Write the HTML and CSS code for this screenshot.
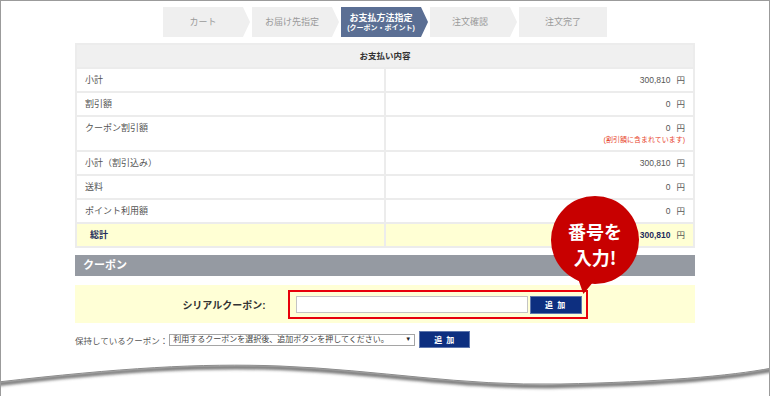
FILE: index.html
```html
<!DOCTYPE html>
<html lang="ja">
  <head>
    <meta charset="utf-8">
    <title>お支払方法指定</title>
    <link rel="stylesheet" href="styles.css">
  </head>
  <body>
    <div class="shot">
      <ol class="steps">
        <li class="step">カート</li>
        <li class="step">お届け先指定</li>
        <li class="step current">お支払方法指定<small>(クーポン・ポイント)</small></li>
        <li class="step">注文確認</li>
        <li class="step last">注文完了</li>
      </ol>

      <table class="summary">
        <tr>
          <th colspan="2">お支払い内容</th>
        </tr>
        <tr>
          <td>小計</td>
          <td class="val"><span class="num">300,810</span><span class="yen">円</span></td>
        </tr>
        <tr>
          <td>割引額</td>
          <td class="val"><span class="num">0</span><span class="yen">円</span></td>
        </tr>
        <tr>
          <td>クーポン割引額</td>
          <td class="val"><span class="num">0</span><span class="yen">円</span><p class="note">(割引額に含まれています)</p></td>
        </tr>
        <tr>
          <td>小計（割引込み）</td>
          <td class="val"><span class="num">300,810</span><span class="yen">円</span></td>
        </tr>
        <tr>
          <td>送料</td>
          <td class="val"><span class="num">0</span><span class="yen">円</span></td>
        </tr>
        <tr>
          <td>ポイント利用額</td>
          <td class="val"><span class="num">0</span><span class="yen">円</span></td>
        </tr>
        <tr class="total">
          <td>総計</td>
          <td class="val"><b class="num">300,810</b><span class="yen">円</span></td>
        </tr>
      </table>

      <h3 class="section-title">クーポン</h3>

      <div class="serial">
        <label for="serial">シリアルクーポン:</label>
        <div class="serial-box">
          <input id="serial" type="text">
          <button type="button" class="btn">追 加</button>
        </div>
        <div class="bubble">番号を<br>入力!</div>
      </div>

      <div class="held">
        <span>保持しているクーポン：</span>
        <span class="select-wrap">
          <select>
            <option>利用するクーポンを選択後、追加ボタンを押してください。</option>
          </select>
        </span>
        <button type="button" class="btn btn-tall">追 加</button>
      </div>

      <!-- torn paper edge -->
      <svg class="torn" width="770" height="46" viewBox="0 350 770 46">
        <defs>
          <clipPath id="below">
            <path d="M-2,382 C120,368 200,363 280,366 C380,370 460,386 560,384 C660,382 730,376 772,368 L772,396 L-2,396 Z" />
          </clipPath>
          <filter id="soft" x="-5%" y="-50%" width="110%" height="200%">
            <feGaussianBlur stdDeviation="1.6" />
          </filter>
        </defs>
        <path fill="#fff" d="M-2,382 C120,368 200,363 280,366 C380,370 460,386 560,384 C660,382 730,376 772,368 L772,396 L-2,396 Z" />
        <g clip-path="url(#below)">
          <path fill="none" stroke="#6f6f6f" stroke-width="4" filter="url(#soft)" transform="translate(0,2)" d="M-2,382 C120,368 200,363 280,366 C380,370 460,386 560,384 C660,382 730,376 772,368" />
        </g>
        <path fill="none" stroke="#8c8c8c" stroke-width="1" d="M-2,382 C120,368 200,363 280,366 C380,370 460,386 560,384 C660,382 730,376 772,368" />
      </svg>
    </div>
  </body>
</html>
```

FILE: styles.css
```css
* {
  box-sizing: border-box;
}
body {
  margin: 0;
  background: #fff;
  color: #555;
  font-family: "Liberation Sans", "Noto Sans CJK JP", sans-serif;
}
.shot {
  position: relative;
  width: 770px;
  height: 396px;
  border: 1px solid #9b9b9b;
  border-bottom: 0;
  overflow: hidden;
}

/* steps */
.steps {
  display: flex;
  justify-content: center;
  gap: 2px;
  margin: 6px 0 0;
  padding: 0;
  list-style: none;
}
.step {
  width: 87px;
  height: 30px;
  padding-right: 7px;
  display: flex;
  flex-direction: column;
  align-items: center;
  justify-content: center;
  background: #efefef;
  color: #9a9a9a;
  font-size: 9px;
  line-height: 11px;
  clip-path: polygon(0 0, calc(100% - 7px) 0, 100% 50%, calc(100% - 7px) 100%, 0 100%);
}
.step.last {
  width: 88px;
  padding-right: 0;
  clip-path: none;
}
.step.current {
  background: #5b6f94;
  color: #fff;
  font-weight: bold;
  line-height: 10px;
}
.step small {
  font-size: 7px;
  line-height: 9px;
}

/* summary table */
.summary {
  width: 620px;
  margin: 6px auto 0;
  border-collapse: collapse;
  font-size: 9px;
  line-height: 11px;
}
.summary th,
.summary td {
  border: 2px solid #ececec;
  padding: 6px 8px 5px;
  vertical-align: top;
  text-align: left;
  width: 50%;
}
.summary th {
  background: #f0f0f0;
  color: #333;
  text-align: center;
  font-size: 8.5px;
}
.summary .val {
  text-align: right;
}
.num {
  font-size: 8.5px;
}
.yen {
  margin-left: 6px;
  font-size: 8.5px;
}
.note {
  margin: 1px 0 0;
  color: #e8462e;
  font-size: 7px;
  line-height: 10px;
}
.total td {
  background: #ffffd4;
  color: #1d2b5c;
  font-weight: bold;
}
.total td:first-child {
  padding-left: 13px;
}
.total .yen {
  color: #555;
  font-weight: normal;
}

/* coupon */
.section-title {
  width: 620px;
  height: 21px;
  margin: 7px auto 0;
  padding-left: 8px;
  background: #959aa2;
  color: #fff;
  font-size: 11px;
  line-height: 21px;
}
.serial {
  position: relative;
  width: 620px;
  height: 38px;
  margin: 9px auto 0;
  display: flex;
  align-items: center;
  justify-content: center;
  gap: 22px;
  background: #ffffd6;
}
.serial label {
  color: #333;
  font-size: 10px;
  font-weight: bold;
}
.serial-box {
  display: flex;
  gap: 2px;
  padding: 4px 4px 3px 6px;
  border: 2px solid #e8000b;
}
.serial-box input {
  width: 232px;
  height: 17px;
  border: 1px solid #c4c4c4;
  background: #fff;
}
.btn {
  width: 52px;
  height: 18px;
  padding: 0;
  border: 1px solid #5f77ad;
  background: #0d2f80;
  color: #fff;
  font-family: inherit;
  font-size: 8px;
  font-weight: bold;
  letter-spacing: 1px;
}
.btn-tall {
  width: 51px;
  height: 17px;
  margin-left: 4px;
}
.bubble {
  position: absolute;
  left: 476px;
  top: -89px;
  width: 88px;
  height: 88px;
  padding-top: 8px;
  border-radius: 50%;
  background: #c80000;
  color: #fff;
  display: flex;
  align-items: center;
  justify-content: center;
  text-align: center;
  font-family: "Noto Sans CJK JP", sans-serif;
  font-size: 18px;
  font-weight: bold;
  line-height: 26px;
}
.bubble::after {
  content: "";
  position: absolute;
  left: 24px;
  top: 74px;
  width: 24px;
  height: 24px;
  background: #c80000;
  clip-path: polygon(0 0, 100% 20%, 35% 100%);
}

.held {
  width: 620px;
  margin: 8px auto 0;
  display: flex;
  align-items: center;
  font-size: 8.5px;
}
.select-wrap {
  position: relative;
  margin-left: 1px;
}
.select-wrap::after {
  content: "▼";
  position: absolute;
  right: 4px;
  top: 2px;
  font-size: 6px;
  color: #222;
  pointer-events: none;
}
.held select {
  display: block;
  width: 246px;
  height: 12px;
  padding: 0 0 0 3px;
  border: 1px solid #a5a5a5;
  background: #fff;
  color: #444;
  font-family: inherit;
  font-size: 8px;
  line-height: 10px;
  appearance: none;
}

.torn {
  position: absolute;
  left: -1px;
  bottom: 0;
}
```
